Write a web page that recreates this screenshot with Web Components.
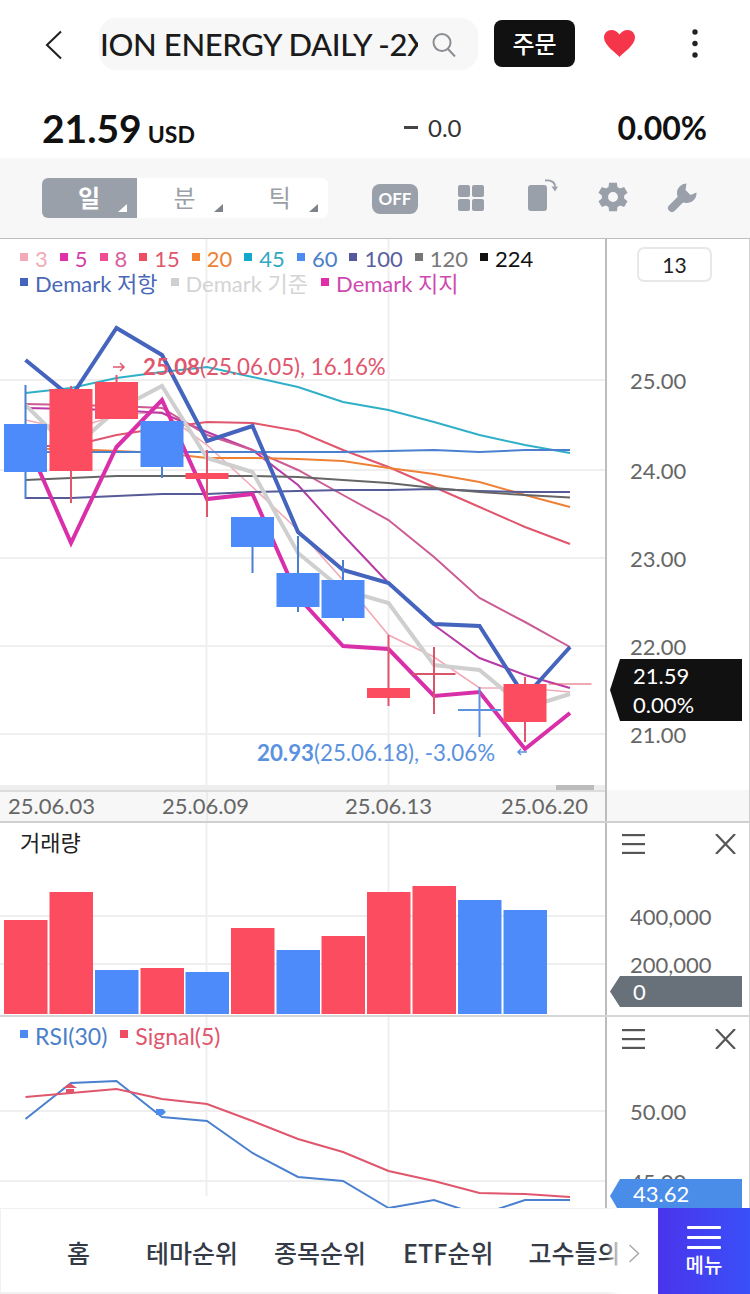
<!DOCTYPE html>
<html lang="ko">
<head>
<meta charset="utf-8">
<title>차트</title>
<style>
  html, body { margin: 0; padding: 0; background: #fff; }
  body { width: 750px; height: 1294px; overflow: hidden; font-family: Lato, "Noto Sans CJK KR", sans-serif; }
</style>
</head>
<body>
<stock-header name="ION ENERGY DAILY -2X"></stock-header>
<quote-row price="21.59" unit="USD" change="0.0" rate="0.00%"></quote-row>
<chart-toolbar></chart-toolbar>
<main-chart></main-chart>
<date-axis></date-axis>
<volume-chart></volume-chart>
<rsi-chart></rsi-chart>
<bottom-nav></bottom-nav>

<script>
const FONT = 'Lato, "Noto Sans CJK KR", sans-serif';
const RED = '#fc4c60';
const BLUE = '#4c8bf9';
// x centre of every daily candle, shared by all three panes
const XS = [25.5, 71, 116.5, 162, 207, 252.5, 298, 343, 388.5, 434, 479.5, 525, 570];

const polyline = (ys, color, width) =>
  `<polyline fill="none" stroke="${color}" stroke-width="${width}" stroke-linejoin="miter" points="${ys.map((y, i) => XS[i] + ',' + y).join(' ')}"/>`;

const gridLines = (hs, top, bottom, vBottom) => {
  const h = hs.map((y) => `<rect x="0" y="${y - 1}" width="606" height="2" fill="#efefef"/>`).join('');
  const v = [206.5, 388.5].map((x, i) =>
    `<rect x="${x - 1}" y="${top}" width="2" height="${(i === 0 && vBottom ? vBottom : bottom) - top}" fill="#efefef"/>`).join('');
  return h + v;
};

class StockHeader extends HTMLElement {
  constructor() {
    super();
    this.attachShadow({ mode: 'open' }).innerHTML = `
      <style>
        :host { display: flex; align-items: flex-start; height: 90px; box-sizing: border-box; padding: 18px 0 0 44px; font-family: ${FONT}; }
        .back { width: 20px; height: 30px; margin-top: 12px; margin-right: 35px; flex: none; }
        .search { width: 379px; height: 52px; box-sizing: border-box; background: #f7f7f7; border-radius: 17px; display: flex; align-items: center; padding: 0 22px 0 1px; flex: none; }
        .name { width: 319px; overflow: hidden; white-space: nowrap; font-size: 31px; font-weight: 500; color: #1b1b1b; letter-spacing: -0.35px; }
        .search svg { margin-left: 14px; flex: none; }
        button { all: unset; width: 81px; height: 47px; margin: 2px 0 0 16px; background: #111; border-radius: 8px; color: #fff; font-size: 24px; font-weight: 500; text-align: center; line-height: 45px; flex: none; }
        .heart { margin: 12px 0 0 29px; flex: none; }
        .more { margin: 10px 0 0 56px; flex: none; }
      </style>
      <svg class="back" viewBox="0 0 20 30"><path d="M17 1.500 3 15l14 13.500" fill="none" stroke="#222" stroke-width="2.100"/></svg>
      <div class="search">
        <span class="name"></span>
        <svg width="24" height="25" viewBox="0 0 24 25" fill="none" stroke="#8a8d92" stroke-width="2"><circle cx="10" cy="10.500" r="8.500"/><path d="m16 17 7 7.500"/></svg>
      </div>
      <button type="button">주문</button>
      <svg class="heart" width="31" height="27" viewBox="0 0 31 27"><path d="M15.500 27C12 23 0 15.500 0 7.600 0 3 3.400 0 7.400 0c3.400 0 6.200 1.700 8.100 4.600C17.400 1.700 20.200 0 23.600 0 27.600 0 31 3 31 7.600 31 15.500 19 23 15.500 27Z" fill="#f5354a"/></svg>
      <svg class="more" width="8" height="32" viewBox="0 0 8 32" fill="#222"><circle cx="4" cy="4" r="2.700"/><circle cx="4" cy="15.500" r="2.700"/><circle cx="4" cy="27" r="2.700"/></svg>`;
  }
  connectedCallback() {
    this.shadowRoot.querySelector('.name').textContent = this.getAttribute('name');
  }
}

class QuoteRow extends HTMLElement {
  constructor() {
    super();
    this.attachShadow({ mode: 'open' }).innerHTML = `
      <style>
        :host { display: grid; grid-template-columns: 362px 1fr auto; align-items: center; height: 68px; box-sizing: border-box; padding: 7px 43px 0 42px; font-family: ${FONT}; color: #111; }
        .price { font-size: 39px; font-weight: 700; }
        .unit { font-size: 23px; font-weight: 700; margin-left: 6px; }
        .change { font-size: 24px; color: #333; display: flex; align-items: center; }
        .change i { display: block; width: 14px; height: 3px; background: #444; margin-right: 10px; }
        .rate { font-size: 32px; font-weight: 700; }
      </style>
      <div><span class="price"></span><span class="unit"></span></div>
      <div class="change"><i></i><span class="value"></span></div>
      <div class="rate"></div>`;
  }
  connectedCallback() {
    const root = this.shadowRoot;
    root.querySelector('.price').textContent = this.getAttribute('price');
    root.querySelector('.unit').textContent = this.getAttribute('unit');
    root.querySelector('.value').textContent = this.getAttribute('change');
    root.querySelector('.rate').textContent = this.getAttribute('rate');
  }
}

class ChartToolbar extends HTMLElement {
  constructor() {
    super();
    this.attachShadow({ mode: 'open' }).innerHTML = `
      <style>
        :host { display: flex; align-items: flex-start; height: 81px; box-sizing: border-box; padding: 20px 0 0 42px; background: #f7f7f8; border-bottom: 1px solid #bdbdbd; font-family: ${FONT}; }
        .tabs { display: flex; width: 286px; height: 40px; background: #fff; border-radius: 6px; overflow: hidden; flex: none; }
        .tab { position: relative; width: 96px; height: 40px; line-height: 39px; text-align: center; font-size: 24px; color: #9a9ea6; padding-right: 1px; box-sizing: border-box; }
        .tab.on { background: #9aa0aa; color: #fff; font-weight: 700; }
        .tab::after { content: ""; position: absolute; right: 10px; bottom: 6px; border-style: solid; border-width: 0 0 8px 9px; border-color: transparent transparent #7f848c transparent; }
        .tab.on::after { border-bottom-color: #fff; }
        .off { width: 46px; height: 30px; margin: 6px 0 0 44px; background: #9aa0aa; border-radius: 8px; color: #fff; font: 700 17px/30px ${FONT}; text-align: center; flex: none; }
        svg { flex: none; fill: #9aa0aa; }
        .grid { margin: 7px 0 0 40px; }
        .rotate { margin: 1px 0 0 44px; }
        .gear { margin: 1px 0 0 36.500px; }
        .wrench { margin: 5px 0 0 36.500px; }
      </style>
      <div class="tabs"><div class="tab on">일</div><div class="tab">분</div><div class="tab">틱</div></div>
      <div class="off">OFF</div>
      <svg class="grid" width="26" height="26" viewBox="0 0 26 26"><rect width="12" height="12" rx="2"/><rect x="14" width="12" height="12" rx="2"/><rect y="14" width="12" height="12" rx="2"/><rect x="14" y="14" width="12" height="12" rx="2"/></svg>
      <svg class="rotate" width="30" height="33" viewBox="0 0 30 33"><rect x="0" y="6" width="19" height="26" rx="3"/><path d="M17 1.500C23 1 27 3 27 7.500" fill="none" stroke="#9aa0aa" stroke-width="1.800"/><path d="m23.500 7.500 3.500 5 3-5z"/></svg>
      <svg class="gear" width="36" height="36" viewBox="0 0 24 24"><path fill-rule="evenodd" d="M19.400 13a7.600 7.600 0 0 0 0-2l2.300-1.800-2.300-3.900-2.700 1.100a7.500 7.500 0 0 0-1.700-1L14.600 2.500h-5.200L9 5.400a7.500 7.500 0 0 0-1.700 1L4.600 5.300 2.300 9.200 4.600 11a7.600 7.600 0 0 0 0 2l-2.300 1.800 2.300 3.900 2.700-1.100a7.500 7.500 0 0 0 1.700 1l.4 2.900h5.200l.4-2.900a7.500 7.500 0 0 0 1.700-1l2.700 1.100 2.300-3.900zM12 15.300a3.300 3.300 0 1 1 0-6.600 3.300 3.300 0 0 1 0 6.600z"/></svg>
      <svg class="wrench" width="30" height="30" viewBox="0 0 30 30"><path d="M5 25 16 14" fill="none" stroke="#9aa0aa" stroke-width="8" stroke-linecap="round"/><path d="M19.500.5A9.800 9.800 0 1 0 29.500 9.500L23.500 12 18.500 7z"/></svg>`;
  }
}

// right hand price scale with labels and the "current value" flag
class PriceAxis extends HTMLElement {
  constructor() {
    super();
    this.attachShadow({ mode: 'open' }).innerHTML = `
      <style>
        :host { display: block; position: relative; box-sizing: border-box; height: 100%; border-left: 2px solid #bdbdbd; border-right: 1px solid #cfcfcf; background: #fff; font: 22px/26px ${FONT}; color: #666; overflow: hidden; }
        .label { position: absolute; left: 23px; white-space: nowrap; }
        .flag { position: absolute; left: 3px; width: 132px; color: #fff; clip-path: polygon(10px 0, 100% 0, 100% 100%, 10px 100%, 0 50%); box-sizing: border-box; padding-left: 23px; }
        .tools { position: absolute; top: 11px; left: 15px; display: flex; gap: 70px; }
        .tools svg { display: block; }
        .count { position: absolute; left: 30px; top: 8px; width: 75px; height: 35px; box-sizing: border-box; border: 2px solid #e8e8e8; border-radius: 7px; color: #222; font-size: 21px; line-height: 31px; text-align: center; }
      </style>
      <div class="items"></div>`;
  }
  // labels: [[text, centreY]], flag: {lines, top, height, color}
  setup({ labels = [], flag, tools, count }) {
    const html = labels.map(([t, y]) => `<div class="label" style="top:${y - 13}px">${t}</div>`).join('');
    const flagHtml = flag
      ? `<div class="flag" style="top:${flag.top}px;height:${flag.height}px;background:${flag.color};line-height:${flag.line}px;padding-top:${flag.pad || 0}px">${flag.lines.join('<br>')}</div>`
      : '';
    const toolHtml = tools
      ? `<div class="tools" style="top:${tools}px">
          <svg width="23" height="20" viewBox="0 0 23 20" fill="#555"><rect y="0" width="23" height="2.200"/><rect y="9" width="23" height="2.200"/><rect y="17.800" width="23" height="2.200"/></svg>
          <svg width="21" height="20" viewBox="0 0 21 20" fill="none" stroke="#555" stroke-width="2.200"><path d="m1 0 19 20M20 0 1 20"/></svg>
        </div>`
      : '';
    const countHtml = count ? `<div class="count">${count}</div>` : '';
    this.shadowRoot.querySelector('.items').innerHTML = html + flagHtml + toolHtml + countHtml;
  }
}

const paneStyle = `
  :host { display: grid; grid-template-columns: 605px 145px; position: relative; overflow: hidden; font-family: ${FONT}; background: #fff; }
  svg.plot { display: block; width: 605px; }
  svg text { font-family: ${FONT}; }
  .legend { position: absolute; left: 20px; top: 0; width: 580px; font-size: 22px; line-height: 24.500px; }
  .legend div { display: flex; gap: 12px; white-space: nowrap; }
  .legend span { display: flex; align-items: center; gap: 7px; }
  .legend i { display: block; width: 8px; height: 8px; margin-top: -4px; flex: none; }
`;

const legendItem = ([label, sq, text]) =>
  `<span style="color:${text || sq}"><i style="background:${sq}"></i>${label}</span>`;

class MainChart extends HTMLElement {
  constructor() {
    super();
    const lines = [
      [[420, 430, 415, 412, 445, 487, 530, 580, 635, 657, 688, 688, 692], '#f2aab6', 1.6],
      [[408, 409, 410, 413, 432, 450, 485, 535, 583, 625, 658, 675, 688], '#b83aa5', 2],
      [[404, 405, 406, 408, 435, 450, 470, 495, 520, 557, 598, 622, 647], '#cc5c94', 2],
      [[446, 446, 435, 428, 422, 423, 431, 450, 467, 487, 507, 527, 544], '#e0566d', 2],
      [[449, 449, 451, 453, 458, 458, 459, 461, 468, 474, 482, 495, 507], '#ee8136', 2],
      [[393, 388, 378, 372, 367, 377, 387, 402, 410, 422, 435, 445, 453], '#2fb0c8', 2],
      [[452, 452, 452, 452, 452, 452, 452, 452, 451, 450, 452, 450, 450], '#4a80cf', 2],
      [[498, 498, 496, 494, 494, 492, 491, 490, 490, 489, 491, 492, 492], '#565a96', 2],
      [[480, 478, 476, 476, 476, 476, 477, 480, 483, 488, 492, 495, 497.500], '#666', 2],
      [[405, 450, 410, 386, 458, 472, 553, 590, 603, 665, 670, 708, 694], '#cfcfcf', 4],
      [[360, 397, 328, 355, 441, 426, 532, 570, 583, 624, 626, 697, 647], '#4464bd', 4],
      [[439, 543, 447, 400, 499, 494, 597, 646, 649, 696, 692, 749, 713], '#d92fa8', 4],
    ];
    // [index, bodyTop, bodyBottom, wickTop, wickBottom, body colour, wick colour]
    const candles = [
      [0, 424, 472, 385, 499, BLUE, '#4a80cf'],
      [1, 389, 471, 386, 503, RED, '#e0566d'],
      [2, 382, 419, 375, 419, RED, '#e0566d'],
      [3, 421, 467, 421, 478, BLUE, '#4a80cf'],
      [4, 473, 479, 450, 517, RED, '#e0566d'],
      [5, 517, 547, 517, 573, BLUE, '#4a80cf'],
      [6, 573, 607, 536, 612, BLUE, '#4a80cf'],
      [7, 580, 618, 560, 621, BLUE, '#4a80cf'],
      [8, 688, 698, 635, 706, RED, '#e0566d'],
      [9, 673, 675, 647, 714, '#d9566a', '#d9566a'],
      [10, 709, 711, 687, 737, '#5a92e0', '#5a92e0'],
      [11, 684, 722, 677, 742, RED, '#e0566d'],
      [12, 683.500, 684.500, 684, 684, '#e0566d', '#e0566d'],
    ];
    const candleSvg = candles.map(([i, t, b, wt, wb, body, wick]) => {
      const x = XS[i];
      return `<rect x="${x - 1}" y="${wt}" width="2" height="${wb - wt}" fill="${wick}"/>` +
        `<rect x="${x - 21.500}" y="${t}" width="43" height="${b - t}" fill="${body}"/>`;
    }).join('');
    this.attachShadow({ mode: 'open' }).innerHTML = `
      <style>${paneStyle}
        :host { height: 551px; }
        .legend { top: 8px; }
        .scroll { position: absolute; left: 0; right: 145px; bottom: 0; height: 5px; background: #eee; }
        .scroll b { position: absolute; left: 556px; width: 38px; top: 0; bottom: 0; background: #bbb; }
      </style>
      <svg class="plot" height="551" viewBox="0 239 605 551">
        ${gridLines([380, 470, 558, 646, 734], 239, 790)}
        ${lines.map(([ys, c, w]) => polyline(ys, c, w)).join('')}
        ${candleSvg}
        <path d="M113 367h11m-4-4 4 4-4 4" fill="none" stroke="#e0566d" stroke-width="1.500"/>
        <text x="143" y="375" font-size="22.300" fill="#e0566d"><tspan font-weight="700">25.08</tspan>(25.06.05), 16.16%</text>
        <text x="257" y="761" font-size="22.300" fill="#5a92e0"><tspan font-weight="700">20.93</tspan>(25.06.18), -3.06%</text>
        <path d="M527 752h-9m3-3-3 3 3 3" fill="none" stroke="#5a92e0" stroke-width="1.500"/>
      </svg>
      <price-axis></price-axis>
      <div class="legend">
        <div>${[['3', '#f2aab6'], ['5', '#e02fa8', '#d23fa8'], ['8', '#ef4d92', '#d9609c'], ['15', '#f04c62', '#e0566d'], ['20', '#f5822f', '#ee8136'], ['45', '#14a8cc', '#2fa9c4'], ['60', '#4c8bf0', '#4a80c8'], ['100', '#55589c', '#5a5e9e'], ['120', '#777', '#777'], ['224', '#111', '#111']].map(legendItem).join('')}</div>
        <div style="gap:13px">${[['Demark 저항', '#4464bd', '#4b68b8'], ['Demark 기준', '#cfcfcf', '#d4d4d4'], ['Demark 지지', '#e02fa8', '#cf48b0']].map(legendItem).join('')}</div>
      </div>
      <div class="scroll"><b></b></div>`;
  }
  connectedCallback() {
    this.shadowRoot.querySelector('price-axis').setup({
      labels: [['25.00', 142], ['24.00', 232], ['23.00', 320], ['22.00', 408], ['21.00', 496]],
      flag: { lines: ['21.59', '0.00%'], top: 420, height: 62, color: '#111', line: 29, pad: 2 },
      count: '13',
    });
  }
}

class DateAxis extends HTMLElement {
  constructor() {
    super();
    this.attachShadow({ mode: 'open' }).innerHTML = `
      <style>
        :host { display: grid; grid-template-columns: 605px 145px; height: 33px; box-sizing: border-box; border-bottom: 2px solid #d0d0d0; font: 22px/27px ${FONT}; color: #666; background: #f7f7f7; }
        .dates { position: relative; box-sizing: border-box; border-top: 2px solid #dcdcdc; background: linear-gradient(#ececec, #ececec) 205.500px 0 / 2px 100% no-repeat, #f7f7f7; }
        .dates span { position: absolute; top: 0; white-space: nowrap; }
        .side { border-left: 2px solid #bdbdbd; border-right: 1px solid #cfcfcf; }
      </style>
      <div class="dates">
        <span style="left:8px">25.06.03</span><span style="left:162px">25.06.09</span><span style="left:345px">25.06.13</span><span style="left:501px">25.06.20</span>
      </div>
      <div class="side"></div>`;
  }
}

class VolumeChart extends HTMLElement {
  constructor() {
    super();
    const tops = [920, 892, 970, 968, 972, 928, 950, 936, 892, 886, 900, 910];
    const colors = [RED, RED, BLUE, RED, BLUE, RED, BLUE, RED, RED, RED, BLUE, BLUE];
    const bars = tops.map((t, i) =>
      `<rect x="${XS[i] - 21.500}" y="${t}" width="43.500" height="${1014 - t}" fill="${colors[i]}"/>`).join('');
    this.attachShadow({ mode: 'open' }).innerHTML = `
      <style>${paneStyle}
        :host { height: 194px; border-bottom: 2px solid #d6d6d6; box-sizing: border-box; }
        .title { position: absolute; left: 20px; top: 4px; font: 22px/28px "Noto Sans CJK KR", sans-serif; color: #222; }
      </style>
      <svg class="plot" height="192" viewBox="0 823 605 192">
        ${gridLines([916, 964], 823, 1015)}
        ${bars}
      </svg>
      <price-axis></price-axis>
      <div class="title">거래량</div>`;
  }
  connectedCallback() {
    this.shadowRoot.querySelector('price-axis').setup({
      labels: [['400,000', 94], ['200,000', 142]],
      flag: { lines: ['0'], top: 153, height: 31, color: '#68707a', line: 31 },
      tools: 11,
    });
  }
}

class RsiChart extends HTMLElement {
  constructor() {
    super();
    const rsi = [1118, 1082, 1080, 1116, 1120, 1152, 1176, 1180, 1207, 1199, 1214, 1199, 1199];
    const signal = [1096, 1092, 1088, 1098, 1103, 1120, 1138, 1151, 1170, 1180, 1192, 1193, 1196];
    this.attachShadow({ mode: 'open' }).innerHTML = `
      <style>${paneStyle}
        :host { height: 192px; }
        .legend { top: 7px; font-size: 23px; }
      </style>
      <svg class="plot" height="192" viewBox="0 1016 605 192">
        ${gridLines([1110, 1180], 1016, 1208, 1195)}
        ${polyline(rsi, '#4a80cf', 2)}
        ${polyline(signal, '#e0566d', 2)}
        <path d="M70 1082l7 5H63z" fill="#e0566d"/><rect x="66" y="1088" width="8" height="4" fill="#e0566d"/>
        <path d="M156 1108h7l3 3-3 3h-7z" fill="#4c8bf0"/>
      </svg>
      <price-axis></price-axis>
      <div class="legend"><div style="gap:13px">${[['RSI(30)', '#4c8bf0', '#4a80c8'], ['Signal(5)', '#f04c62', '#e0566d']].map(legendItem).join('')}</div></div>`;
  }
  connectedCallback() {
    this.shadowRoot.querySelector('price-axis').setup({
      labels: [['50.00', 95], ['45.00', 165]],
      flag: { lines: ['43.62'], top: 162, height: 34, color: '#4a8de8', line: 30 },
      tools: 12,
    });
  }
}

class BottomNav extends HTMLElement {
  constructor() {
    super();
    this.attachShadow({ mode: 'open' }).innerHTML = `
      <style>
        :host { display: flex; position: absolute; left: 0; top: 1208px; width: 750px; height: 86px; font-family: "Noto Sans CJK KR", sans-serif; background: #fff; box-shadow: inset 1px 1px 0 #f1f1f1, inset 0 -2px 0 #f1f1f1; }
        .items { position: relative; flex: 1; display: flex; align-items: center; padding-top: 1px; color: #343a46; font-size: 25px; font-weight: 500; white-space: nowrap; overflow: hidden; }
        .items span { flex: none; }
        .fade { position: absolute; left: 606px; top: 0; bottom: 0; width: 52px; background: linear-gradient(90deg, rgba(255,255,255,0), #fff 30%); }
        .chev { position: absolute; left: 628px; top: 36px; }
        .menu { width: 92px; flex: none; background: linear-gradient(90deg, #4a34ec, #3a50f8); color: #fff; display: flex; flex-direction: column; align-items: center; font-size: 20px; font-weight: 500; line-height: 24px; }
        .menu svg { display: block; margin: 18px 0 3px -1px; }
      </style>
      <div class="items">
        <span style="margin-left:67px">홈</span>
        <span style="margin-left:56px">테마순위</span>
        <span style="margin-left:36px">종목순위</span>
        <span style="margin-left:37px">ETF순위</span>
        <span style="margin-left:35px">고수들의</span>
        <div class="fade"></div>
        <svg class="chev" width="12" height="19" viewBox="0 0 12 19"><path d="m1.500 1 9 8.500-9 8.500" fill="none" stroke="#aaa" stroke-width="1.500"/></svg>
      </div>
      <div class="menu">
        <svg width="34" height="24" viewBox="0 0 34 24" fill="#fff"><rect width="34" height="3" rx="1"/><rect y="10" width="34" height="3" rx="1"/><rect y="20" width="34" height="3" rx="1"/></svg>
        메뉴
      </div>`;
  }
}

customElements.define('stock-header', StockHeader);
customElements.define('quote-row', QuoteRow);
customElements.define('chart-toolbar', ChartToolbar);
customElements.define('price-axis', PriceAxis);
customElements.define('main-chart', MainChart);
customElements.define('date-axis', DateAxis);
customElements.define('volume-chart', VolumeChart);
customElements.define('rsi-chart', RsiChart);
customElements.define('bottom-nav', BottomNav);
</script>
</body>
</html>
